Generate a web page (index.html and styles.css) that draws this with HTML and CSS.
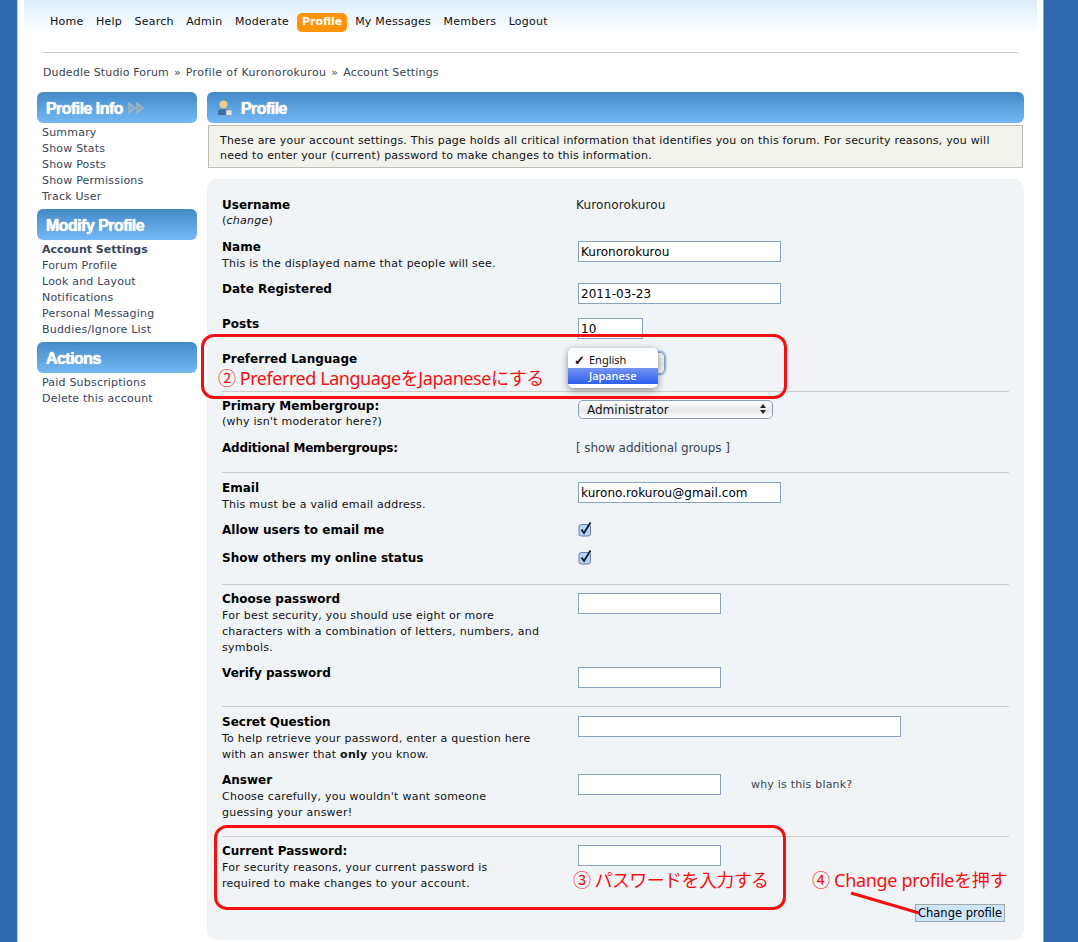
FILE: index.html
```html
<!DOCTYPE html>
<html lang="en">
<head>
<meta charset="utf-8">
<title>Account Settings</title>
<link rel="stylesheet" href="styles.css">
</head>
<body>
<div class="page">
  <header class="top">
    <nav class="nav">
      <a>Home</a><a>Help</a><a>Search</a><a>Admin</a><a>Moderate</a><a class="active">Profile</a><a>My Messages</a><a>Members</a><a>Logout</a>
    </nav>
  </header>
  <div class="crumbs"><span>Dudedle Studio Forum</span><b>»</b><span class="wide">Profile of Kuronorokurou</span><b>»</b><span>Account Settings</span></div>
  <div class="columns">
    <aside class="side">
      <h3 class="bar"><span>Profile Info</span>
        <svg class="arrows" width="16" height="12" viewBox="0 0 16 12"><path d="M1 1l6 5-6 5z M9 1l6 5-6 5z" fill="#7fa9cf" stroke="#aeb4b8" stroke-width="1.200"/></svg>
      </h3>
      <ul class="links"><li>Summary</li><li>Show Stats</li><li>Show Posts</li><li>Show Permissions</li><li>Track User</li></ul>
      <h3 class="bar"><span>Modify Profile</span></h3>
      <ul class="links"><li class="current">Account Settings</li><li>Forum Profile</li><li>Look and Layout</li><li>Notifications</li><li>Personal Messaging</li><li>Buddies/Ignore List</li></ul>
      <h3 class="bar"><span>Actions</span></h3>
      <ul class="links"><li>Paid Subscriptions</li><li>Delete this account</li></ul>
    </aside>
    <main class="main">
      <h3 class="bar bar-main">
        <svg width="16" height="16" viewBox="0 0 16 16"><circle cx="6.500" cy="4.500" r="4" fill="#e8cf95" stroke="#c9ad6f" stroke-width=".6"/><path d="M1 15v-3c0-2 2-3 5.500-3S12 10 12 12v3z" fill="#3f6da3"/><rect x="9" y="10" width="6" height="5.500" fill="#dfe6ee" stroke="#7c8ea3" stroke-width=".7"/></svg>
        <span>Profile</span>
      </h3>
      <p class="notice">These are your account settings. This page holds all critical information that identifies you on this forum. For security reasons, you will need to enter your (current) password to make changes to this information.</p>
      <form class="panel">
        <div class="row"><div class="lab tight"><b>Username</b><small>(<i>change</i>)</small></div><div class="plain">Kuronorokurou</div></div>
        <div class="row g10"><div class="lab"><b>Name</b><small>This is the displayed name that people will see.</small></div><div><input class="field w-m" value="Kuronorokurou"></div></div>
        <div class="row g9"><div class="lab"><b>Date Registered</b></div><div><input class="field w-m" value="2011-03-23"></div></div>
        <div class="row g12"><div class="lab"><b>Posts</b></div><div><input class="field w-xs" value="10"></div></div>
        <div class="row g12"><div class="lab"><b>Preferred Language</b></div><div class="select-wrap"><select class="aqua focus w-lang"><option>English</option></select></div></div>
        <hr class="rule t16">
        <div class="row"><div class="lab tight"><b>Primary Membergroup:</b><small>(why isn't moderator here?)</small></div>
          <div class="select-wrap"><select class="aqua w-group"><option>Administrator</option></select><span class="stepper"></span></div></div>
        <div class="row g10"><div class="lab narrow"><b>Additional Membergroups:</b></div><div class="plain blue">[ show additional groups ]</div></div>
        <hr class="rule t15">
        <div class="row p1"><div class="lab"><b>Email</b><small>This must be a valid email address.</small></div><div><input class="field w-m" value="kurono.rokurou@gmail.com"></div></div>
        <div class="row g9"><div class="lab"><b>Allow users to email me</b></div><div class="check-cell"><svg class="check" width="15" height="15" viewBox="0 0 15 15"><rect x="1" y="2.500" width="11.500" height="11.500" rx="2.500" fill="#b9d4f5" stroke="#6a7bb0"/><path d="M3.500 7.500l2.500 3.500L12.500 .5" fill="none" stroke="#12233f" stroke-width="2"/></svg></div></div>
        <div class="row g11"><div class="lab"><b>Show others my online status</b></div><div class="check-cell"><svg class="check" width="15" height="15" viewBox="0 0 15 15"><rect x="1" y="2.500" width="11.500" height="11.500" rx="2.500" fill="#b9d4f5" stroke="#6a7bb0"/><path d="M3.500 7.500l2.500 3.500L12.500 .5" fill="none" stroke="#12233f" stroke-width="2"/></svg></div></div>
        <hr class="rule t17">
        <div class="row"><div class="lab"><b>Choose password</b><small>For best security, you should use eight or more characters with a combination of letters, numbers, and symbols.</small></div><div><input class="field w-s" type="password"></div></div>
        <div class="row g9"><div class="lab"><b>Verify password</b></div><div><input class="field w-s" type="password"></div></div>
        <hr class="rule t18">
        <div class="row p1"><div class="lab"><b>Secret Question</b><small>To help retrieve your password, enter a question here with an answer that <strong>only</strong> you know.</small></div><div><input class="field w-l"></div></div>
        <div class="row g9"><div class="lab"><b>Answer</b><small>Choose carefully, you wouldn't want someone guessing your answer!</small></div><div class="answer"><input class="field w-s"><span>why is this blank?</span></div></div>
        <hr class="rule t15">
        <div class="row"><div class="lab short"><b>Current Password:</b><small>For security reasons, your current password is required to make changes to your account.</small></div><div><input class="field w-s" type="password"></div></div>
        <div class="actions"><button type="button" class="submit">Change profile</button></div>

        <div class="mark mark-lang"></div>
        <div class="mark mark-pass"></div>
        <div class="note note-lang">② Preferred LanguageをJapaneseにする</div>
        <div class="note note-pass">③ パスワードを入力する</div>
        <div class="note note-change">④ Change profileを押す</div>
        <svg class="pointer" width="72" height="26" viewBox="0 0 72 26"><line x1="2" y1="2" x2="70" y2="22" stroke="#f51010" stroke-width="3"/></svg>
        <ul class="menu">
          <li><span class="tick">✓</span>English</li>
          <li class="hot">Japanese</li>
        </ul>
      </form>
    </main>
  </div>
</div>
</body>
</html>
```
FILE: styles.css
```css
* { box-sizing: border-box; }
html, body { margin: 0; height: 942px; overflow: hidden; }
body {
  background: #2e69b1;
  font-family: "DejaVu Sans", Verdana, sans-serif;
  font-size: 11px;
  color: #000;
}
.page {
  width: 1027px;
  height: 942px;
  margin-left: 17px;
  background: #fff;
  border-left: 1px solid #c9ccd0;
  border-right: 1px solid #9aa3ad;
  overflow: hidden;
}
.top {
  height: 35px;
  margin: 0 6px;
  padding: 12px 0 0 24px;
  background: linear-gradient(#dcedfc, #eef6fe 45%, #fff);
}
.nav { display: flex; align-items: center; height: 20px; color: #111; letter-spacing: .22px; }
.nav a { padding: 0 6.3px; line-height: 20px; white-space: nowrap; }
.nav a:first-child { padding-left: 2px; }
.nav .active {
  padding: 0 5px;
  margin: 0 1.5px;
  height: 19px;
  line-height: 18px;
  background: #ff9408;
  color: #fff;
  font-weight: bold;
  letter-spacing: 0;
  border-radius: 5px;
}
.crumbs {
  margin: 17px 25px 0;
  padding-top: 12px;
  height: 40px;
  border-top: 1px solid #ccc;
  line-height: 16px;
  display: flex;
  color: #3a4350;
  letter-spacing: .15px;
}
.crumbs b { font-weight: normal; margin: 0 5px 0 5px; }
.crumbs .wide { letter-spacing: .35px; }
.columns { display: flex; gap: 10px; margin-left: 19px; }
.side { width: 160px; flex: none; }
.main { width: 817px; flex: none; }
.bar {
  margin: 0;
  height: 31px;
  padding-left: 9px;
  display: flex;
  align-items: center;
  color: #fff;
  background: linear-gradient(#448ac7, #74b8f6);
  border-radius: 6px;
  font-family: "Liberation Sans", Arial, sans-serif;
  font-weight: bold;
  font-size: 16px;
  letter-spacing: -.55px;
  text-shadow: 0 0 1px #fff, 0 0 1px rgba(255,255,255,.6);
}
.bar span { position: relative; top: 1px; }
.arrows { margin-left: 5px; }
.bar-main { padding-left: 10px; gap: 8px; }
.links { list-style: none; margin: 2px 0 4px; padding: 0 0 0 5px; color: #39435a; letter-spacing: .2px; }
.links li { line-height: 16px; }
.links .current { font-weight: bold; letter-spacing: 0; }
.notice {
  margin: 2px 1px 0;
  height: 43px;
  padding: 7px 11px 0;
  background: #f3f3ee;
  border: 1px solid #bcbcb8;
  line-height: 15px;
  color: #111;
  letter-spacing: .2px;
}
.panel {
  position: relative;
  margin-top: 11px;
  height: 761px;
  padding: 18px 15px 0;
  background: #f0f4f7;
  border-radius: 10px;
}
.row { display: grid; grid-template-columns: 356px 1fr; }
.p1 { padding-top: 1px; }
.g9 { margin-top: 9px; }
.g10 { margin-top: 10px; }
.g11 { margin-top: 11px; }
.g12 { margin-top: 12px; }
.lab b { display: block; font-size: 12px; line-height: 17px; }
.tight b { line-height: 16px; }
.narrow b { letter-spacing: -.2px; }
.lab small { display: block; font-size: 11px; line-height: 16px; width: 319px; color: #111; letter-spacing: .25px; }
.short small { width: 300px; }
.lab strong { font-weight: bold; }
.plain { line-height: 16px; font-size: 12px; margin-left: -2px; color: #222; letter-spacing: .15px; }
.plain.blue { color: #3a4350; letter-spacing: -.1px; }
.field {
  display: block;
  margin-top: 2px;
  height: 21px;
  padding: 2px 2px 1px;
  border: 1px solid #8aa2c2;
  background: #fff;
  font: 12px "DejaVu Sans", sans-serif;
  letter-spacing: .05px;
  color: #000;
  outline: 0;
}
.w-xs { width: 65px; }
.w-s { width: 143px; }
.w-m { width: 203px; }
.w-l { width: 323px; }
.select-wrap { position: relative; height: 22px; margin-top: 2px; }
.aqua {
  appearance: none;
  display: block;
  height: 19px;
  padding: 0 8px;
  border: 1px solid #8d9fb8;
  border-radius: 5px;
  background: linear-gradient(#fff, #e8e8e8 55%, #fff);
  font: 12px "DejaVu Sans", sans-serif;
  color: #111;
}
.w-group { width: 195px; }
.w-lang { width: 87px; height: 22px; margin-top: -1px; box-shadow: 0 0 2px 1px #6f9fdc; }
.stepper { position: absolute; left: 182px; top: 4px; width: 0; height: 0; border: 3px solid transparent; border-top: 0; border-bottom: 4px solid #222; }
.stepper::after { content: ""; position: absolute; left: -3px; top: 6px; border: 3px solid transparent; border-bottom: 0; border-top: 4px solid #222; }
.rule { height: 1px; margin: 0 0 6px; border: 0; background: #ccc; }
.t15 { margin-top: 15px; }
.t16 { margin-top: 16px; }
.t17 { margin-top: 17px; }
.t18 { margin-top: 18px; }
.check-cell { height: 17px; position: relative; }
.check { display: block; margin-top: 0; }
.answer { display: flex; align-items: flex-start; }
.answer span { margin: 6px 0 0 30px; color: #3a4350; line-height: 14px; letter-spacing: .2px; }
.actions { position: absolute; right: 19px; top: 725px; }
.submit {
  width: 90px;
  height: 18px;
  padding: 0;
  border: 1px solid #a6a6a6;
  background: #cde6ff;
  font: 11.500px "DejaVu Sans", sans-serif;
  color: #000;
}
.mark { position: absolute; border: 3px solid #f51010; border-radius: 13px; }
.mark-lang { left: -6px; top: 155px; width: 586px; height: 65px; }
.mark-pass { left: 7px; top: 646px; width: 572px; height: 85px; }
.note {
  position: absolute;
  color: #f51010;
  font-family: "Noto Sans", "Noto Sans CJK JP", sans-serif;
  font-weight: 400;
  font-size: 18px;
  line-height: 24px;
  white-space: nowrap;
}
.note-lang { left: 11px; top: 187px; letter-spacing: -.45px; }
.note-pass { left: 366px; top: 689px; letter-spacing: -.6px; }
.note-change { left: 605px; top: 689px; letter-spacing: -.3px; }
.pointer { position: absolute; left: 642px; top: 712px; }
.menu {
  position: absolute;
  left: 361px;
  top: 169px;
  width: 90px;
  height: 40px;
  margin: 0;
  padding: 4px 0;
  list-style: none;
  background: #fff;
  border-radius: 5px;
  box-shadow: 0 2px 7px rgba(0,0,0,.45);
  font-family: "Noto Sans", sans-serif;
  font-size: 11px;
  color: #111;
}
.menu li { height: 16px; line-height: 16px; padding-left: 21px; position: relative; }
.tick { position: absolute; left: 6px; font-size: 13px; font-weight: bold; }
.menu .hot { color: #fff; background: linear-gradient(#7396f0, #2e5ff0); font-weight: 500; }
```
